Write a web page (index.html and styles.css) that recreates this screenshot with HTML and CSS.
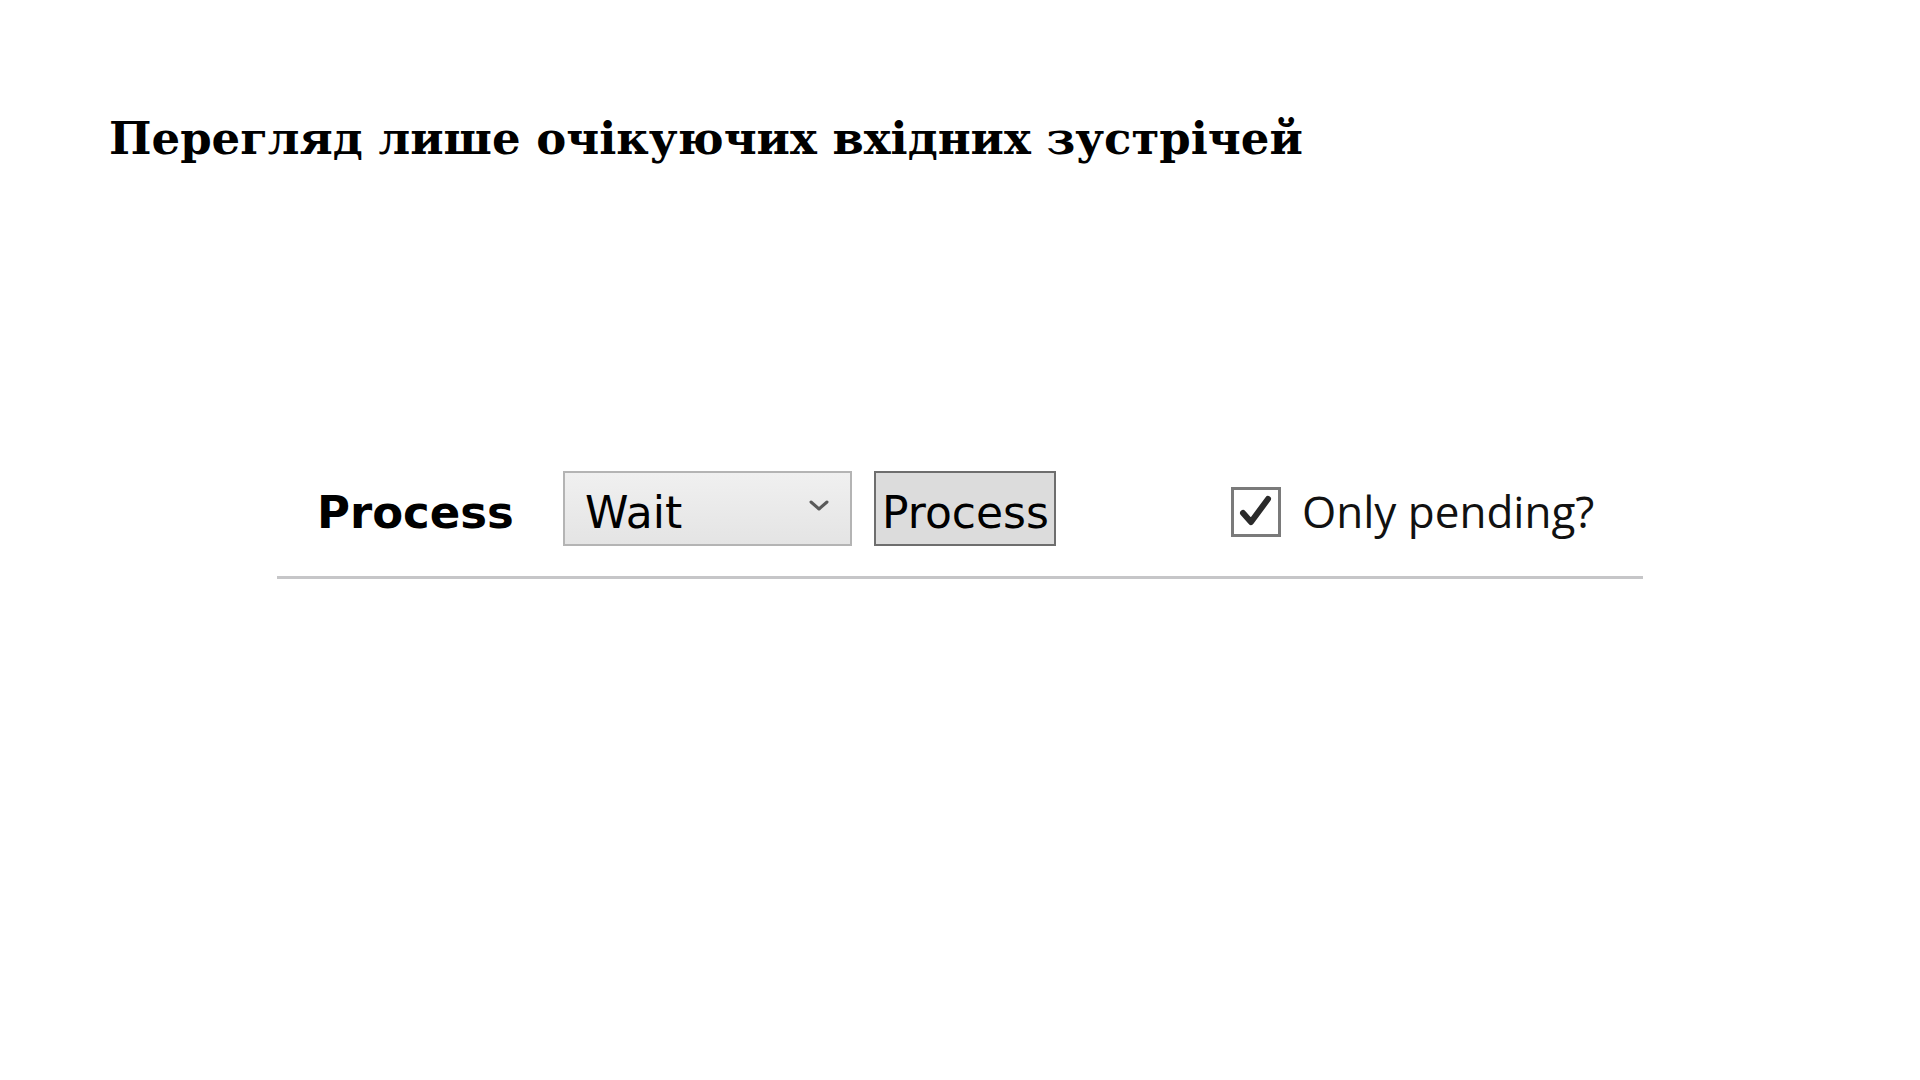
FILE: index.html
```html
<!DOCTYPE html>
<html lang="uk">
<head>
<meta charset="utf-8">
<title>Перегляд лише очікуючих вхідних зустрічей</title>
<link rel="stylesheet" href="styles.css">
</head>
<body>
<main class="slide">
  <h1 class="title">Перегляд лише очікуючих вхідних зустрічей</h1>
  <div class="toolbar">
    <span class="label">Process</span>
    <div class="select">
      <span class="select-value">Wait</span>
      <svg class="chevron" width="22" height="14" viewBox="0 0 22 14" aria-hidden="true">
        <path d="M3 3 L11 10 L19 3" fill="none" stroke="#5a5a5a" stroke-width="3" stroke-linecap="round" stroke-linejoin="round"/>
      </svg>
    </div>
    <button class="button">Process</button>
    <label class="check">
      <span class="box">
        <svg width="40" height="40" viewBox="0 0 40 40" aria-hidden="true">
          <path d="M7 21 L15 30 L32 7" fill="none" stroke="#2b2b2b" stroke-width="6" stroke-linecap="round" stroke-linejoin="round"/>
        </svg>
      </span>
      <span class="check-text">Only pending?</span>
    </label>
  </div>
</main>
</body>
</html>
```

FILE: styles.css
```css
html, body {
  margin: 0;
  padding: 0;
  background: #ffffff;
}

.slide {
  width: 1920px;
  height: 1080px;
  padding-top: 109px;
  box-sizing: border-box;
}

.title {
  margin: 0 0 0 109px;
  font-family: "DejaVu Serif", "Liberation Serif", serif;
  font-weight: bold;
  font-size: 45px;
  line-height: 60px;
  color: #000;
}

.toolbar {
  margin: 302px 0 0 277px;
  width: 1366px;
  height: 108px;
  display: flex;
  align-items: flex-start;
  padding: 0 0 0 40px;
  box-sizing: border-box;
  border-bottom: 3px solid #c6c6c8;
  font-family: "DejaVu Sans", Verdana, sans-serif;
  font-size: 44px;
  color: #000;
}

.label {
  font-weight: bold;
  font-size: 45px;
  width: 246px;
  height: 75px;
  line-height: 67px;
  padding-top: 8px;
  box-sizing: border-box;
}

.select {
  width: 289px;
  height: 75px;
  box-sizing: border-box;
  border: 2px solid #b4b4b4;
  background: linear-gradient(#f0f0f0, #e4e4e4);
  display: flex;
  align-items: center;
  justify-content: space-between;
  padding: 0 20px 0 20px;
}

.select-value {
  line-height: 1;
  padding-top: 8px;
}

.chevron {
  margin-top: -6px;
}

.button {
  margin-left: 22px;
  width: 182px;
  height: 75px;
  box-sizing: border-box;
  border: 2px solid #6e6e6e;
  background: #dcdcdc;
  font-family: "DejaVu Sans", Verdana, sans-serif;
  font-size: 44px;
  color: #000;
  padding: 8px 0 0 6px;
  text-align: left;
  white-space: nowrap;
  overflow: hidden;
  border-radius: 0;
}

.check {
  margin-left: 175px;
  height: 75px;
  display: flex;
  align-items: center;
}

.box {
  width: 50px;
  height: 50px;
  box-sizing: border-box;
  border: 3px solid #7a7a7a;
  background: #fff;
  display: flex;
  align-items: center;
  justify-content: center;
  margin-top: 6px;
}

.check-text {
  margin-left: 21px;
  font-family: "Open Sans", "Noto Sans", sans-serif;
  font-size: 44px;
  line-height: 1;
  padding-top: 5px;
  color: #111;
}
```
